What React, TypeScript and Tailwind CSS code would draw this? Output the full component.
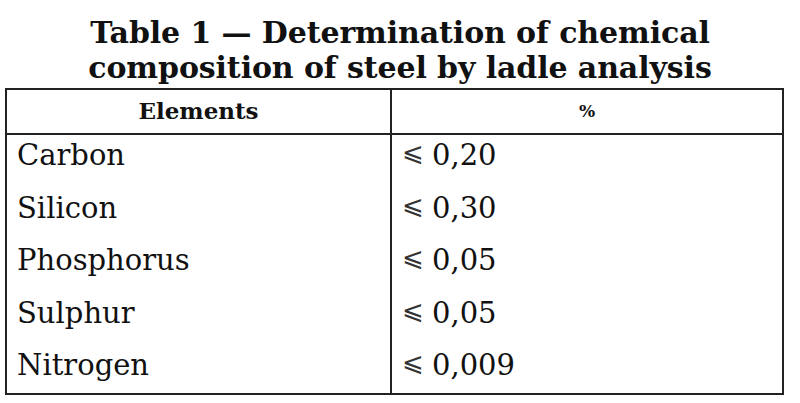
import React from "react";

const rows: [string, string][] = [
  ["Carbon", "0,20"],
  ["Silicon", "0,30"],
  ["Phosphorus", "0,05"],
  ["Sulphur", "0,05"],
  ["Nitrogen", "0,009"],
];

export default function App() {
  return (
    <div
      className="w-[800px] h-[403px] bg-white text-[#111] overflow-hidden"
      style={{ fontFamily: '"DejaVu Serif", "Liberation Serif", serif' }}
    >
      <div className="pt-[15px] text-center font-bold text-[30px] leading-[35px] tracking-[-0.1px]">
        <div>Table 1 — Determination of chemical</div>
        <div>composition of steel by ladle analysis</div>
      </div>
      <div className="ml-[5px] mt-[3px] w-[779px] h-[307px] border-2 border-[#222] flex flex-col">
        <div className="flex h-[45px] border-b-2 border-[#222] shrink-0">
          <div className="w-[385px] border-r-2 border-[#222] flex items-center justify-center font-bold text-[23px]">
            Elements
          </div>
          <div className="flex-1 flex items-center justify-center font-bold text-[17px]">%</div>
        </div>
        <div className="flex flex-1 overflow-hidden">
          <div className="w-[385px] border-r-2 border-[#222] pl-[10px]">
            {rows.map(([e]) => (
              <div key={e} className="h-[52.5px] leading-[40px] text-[29px]">
                {e}
              </div>
            ))}
          </div>
          <div className="flex-1 pl-[10px]">
            {rows.map(([e, v]) => (
              <div key={e} className="h-[52.5px] flex items-center gap-[8px] pb-[12px]">
                <span className="text-[26px] leading-[40px] relative top-[-3px] text-[#333]">⩽</span>
                <span className="text-[29px] leading-[40px]">{v}</span>
              </div>
            ))}
          </div>
        </div>
      </div>
    </div>
  );
}
